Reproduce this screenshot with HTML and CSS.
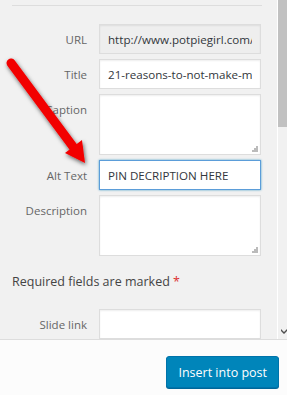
FILE: index.html
```html
<!DOCTYPE html>
<html lang="en">
<head>
    <meta charset="UTF-8">
    <link rel="stylesheet" href="styles.css">
    <title>Attachment details</title>
</head>
<body>
    <div class="modal">
        <div class="content">
            <div class="panel">
                <hr class="divider">

                <!-- Attachment fields -->
                <div class="field">
                    <label>URL</label>
                    <input class="readonly" type="text" value="http://www.potpiegirl.com/wp-content" readonly>
                </div>
                <div class="field">
                    <label>Title</label>
                    <input type="text" value="21-reasons-to-not-make-money">
                </div>
                <div class="field">
                    <label>Caption</label>
                    <div class="area"><textarea></textarea><span class="grip"></span></div>
                </div>
                <div class="field">
                    <label>Alt Text</label>
                    <input class="focus" type="text" value="PIN DECRIPTION HERE">
                </div>
                <div class="field">
                    <label>Description</label>
                    <div class="area"><textarea></textarea><span class="grip"></span></div>
                </div>

                <p class="required">Required fields are marked <span class="star">*</span></p>

                <div class="field">
                    <label>Slide link</label>
                    <input type="text" value="">
                </div>
            </div>
            <div class="scrollbar">
                <div class="thumb"></div>
                <svg class="arrow-down" width="6" height="5" viewBox="0 0 6 5"><path d="M0 0 L3 3 L6 0 L6 2 L3 5 L0 2 Z" fill="#505050"/></svg>
            </div>

            <!-- Red pointer drawn over the form -->
            <svg class="pointer" width="100" height="175" viewBox="0 0 100 175">
                <defs>
                    <filter id="shade" x="-30%" y="-30%" width="160%" height="160%">
                        <feDropShadow dx="1" dy="2" stdDeviation="2" flood-color="#000" flood-opacity="0.6"/>
                    </filter>
                </defs>
                <g filter="url(#shade)">
                    <line x1="11" y1="63" x2="74" y2="148" stroke="#f20000" stroke-width="9" stroke-linecap="round"/>
                    <polygon points="82,140 65,153 85,163" fill="#f20000"/>
                </g>
            </svg>
        </div>
        <div class="footer">
            <button class="insert">Insert into post</button>
        </div>
    </div>
</body>
</html>
```

FILE: styles.css
```css
body {
    margin: 0;
    font-family: 'Open Sans', sans-serif;
    font-size: 12px;
    color: #444;
    overflow: hidden;
}
.modal {
    display: flex;
    flex-direction: column;
    width: 287px;
    height: 395px;
}
.content {
    position: relative;
    display: flex;
    height: 339px;
    overflow: hidden;
}
.panel {
    width: 278px;
    background: #f1f1f1;
    border-right: 1px solid #fff;
    padding: 0 17px 0 12px;
    box-sizing: border-box;
    flex-shrink: 0;
}
.divider {
    border: 0;
    border-top: 1px solid #ddd;
    margin: 5px 0 18px;
    width: 250px;
}
.field {
    display: flex;
    gap: 12px;
    margin-bottom: 5px;
}
.field label {
    width: 75px;
    flex-shrink: 0;
    text-align: right;
    color: #666;
    padding-top: 8px;
    font-size: 11.5px;
}
.field input,
.field textarea {
    width: 162px;
    height: 30px;
    box-sizing: border-box;
    border: 1px solid #ddd;
    background: #fff;
    box-shadow: inset 0 1px 2px rgba(0, 0, 0, 0.07);
    font-family: 'Open Sans', sans-serif;
    font-size: 11.6px;
    color: #32373c;
    padding: 3px 8px;
    margin: 0;
    outline: none;
    overflow: hidden;
}
.field input.readonly {
    background: #eee;
}
.field input.focus {
    border-color: #5b9dd9;
    box-shadow: 0 0 2px rgba(30, 140, 190, 0.8);
}
.area {
    position: relative;
}
.field textarea {
    display: block;
    height: 61px;
    resize: none;
}
.grip {
    position: absolute;
    right: 3px;
    bottom: 3px;
    width: 6px;
    height: 6px;
    background:
        radial-gradient(circle, #bbb 0.8px, transparent 1px) 4px 0 / 2px 2px no-repeat,
        radial-gradient(circle, #bbb 0.8px, transparent 1px) 2px 2px / 2px 2px no-repeat,
        radial-gradient(circle, #bbb 0.8px, transparent 1px) 4px 2px / 2px 2px no-repeat,
        radial-gradient(circle, #bbb 0.8px, transparent 1px) 0 4px / 2px 2px no-repeat,
        radial-gradient(circle, #bbb 0.8px, transparent 1px) 2px 4px / 2px 2px no-repeat,
        radial-gradient(circle, #bbb 0.8px, transparent 1px) 4px 4px / 2px 2px no-repeat;
}
.required {
    margin: 17px 0 19px;
    font-size: 12.5px;
    color: #444;
}
.star {
    color: #dc3232;
}
.scrollbar {
    position: relative;
    flex: 1;
    background: #f1f1f1;
}
.thumb {
    height: 127px;
    background: #c1c1c1;
}
.arrow-down {
    position: absolute;
    left: 3px;
    bottom: 5px;
}
.pointer {
    position: absolute;
    left: 0;
    top: 0;
    pointer-events: none;
}
.footer {
    flex: 1;
    display: flex;
    justify-content: flex-end;
    align-items: flex-start;
    background: #fcfcfc;
    border-top: 1px solid #ddd;
    padding: 16px 8px 0 0;
}
.insert {
    height: 32px;
    padding: 0 11px;
    background: #0085ba;
    border: 1px solid #0073aa;
    border-radius: 3px;
    box-shadow: 0 1px 0 #006799;
    color: #fff;
    font-family: 'Open Sans', sans-serif;
    font-size: 12.5px;
}
```
